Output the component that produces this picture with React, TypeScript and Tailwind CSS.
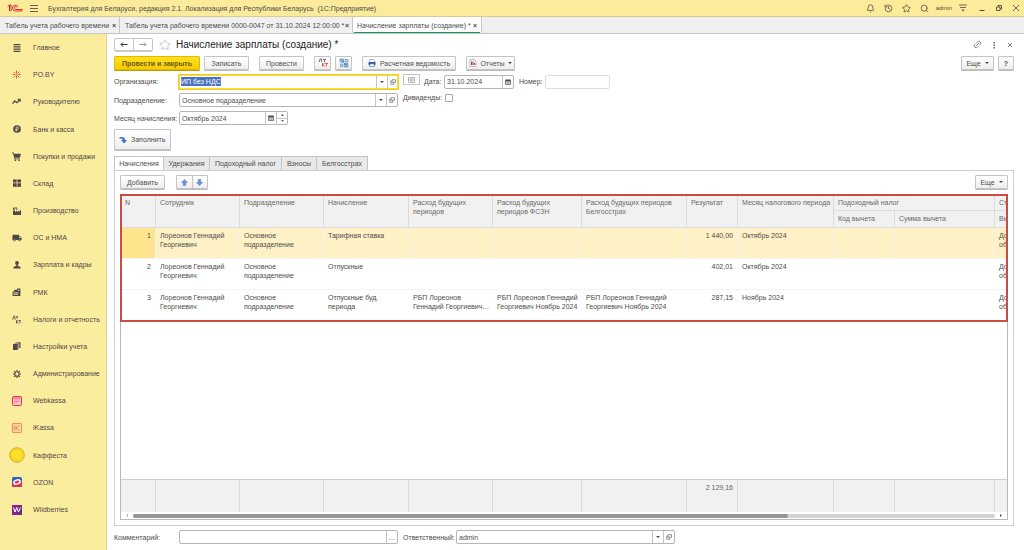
import { useEffect, useRef } from "react";
import type { ReactNode } from "react";
import { Bell, History, Link2, Search, Star } from "lucide-react";
import { MdLocalShipping } from "react-icons/md";

const button =
  "flex h-[14px] shrink-0 items-center justify-center whitespace-nowrap rounded-[1px] border border-[#c4c4c4] bg-linear-to-b from-white to-[#eeeeee] text-[#505050] shadow-[0_1px_0_#bdbdbd]";

const field = "flex h-[14px] items-stretch rounded-[2px] border border-[#b5b5b5] bg-white";

/* ---------- icons ---------- */

const Logo = () => (
  <svg viewBox="0 0 32 16" className="h-2 w-4" fill="none" stroke="#dc2630" strokeWidth="2">
    <path d="M1 5.500 5 2v12M8 14V1.500L3.500 5" />
    <path d="M22 5.500A5.800 5.800 0 1 0 17 14h14" />
    <path d="M19.500 6.500A2.800 2.800 0 1 0 17 11h14" />
  </svg>
);

const OpenIcon = () => (
  <svg viewBox="0 0 12 12" className="size-[6px]" fill="none" stroke="#666" strokeWidth="1.400">
    <path d="M4 1.500h7v5H4zM4 4H1.500v6.500h6V7" />
  </svg>
);

const Caret = () => (
  <svg viewBox="0 0 8 4" className="h-[2px] w-1" fill="#4a4a4a">
    <path d="M0 0h8L4 4z" />
  </svg>
);

const CalendarIcon = () => (
  <svg viewBox="0 0 12 12" className="size-[6px]">
    <path d="M1 2h10v9H1z" fill="#ddd" stroke="#606060" strokeWidth="1.500" />
    <path d="M1 2h10v3H1zM3 0h1.500v2H3zM7.500 0H9v2H7.500z" fill="#505050" />
    <path d="M3 7h6M3 9h6" stroke="#888" />
  </svg>
);

const DtKt = () => (
  <svg viewBox="0 0 20 20" className="size-[10px]" fill="none" strokeWidth="1.700">
    <path d="M2 8V7h1l1-5h3v5h1v1M10 3h6M13 3v5" stroke="#505a68" />
    <path d="M9 10v7M13.500 10 9.500 13.500 14 17M14 11h6M17 11v6" stroke="#dd4b35" />
  </svg>
);

const StructureIcon = () => (
  <svg viewBox="0 0 20 20" className="size-[10px]">
    <path d="M2 2h7v6H2zM12 3h6v5h-6zM3 12h5v5H3zM11 11h7v7h-7z" fill="#cfe1f4" stroke="#4f86bf" strokeWidth="1.400" />
    <path d="m5 5 9 9M3.500 4h4M12.500 13h4M12.500 16h4" stroke="#29649f" strokeWidth="1.400" />
  </svg>
);

const PrinterIcon = () => (
  <svg viewBox="0 0 18 18" className="size-2">
    <path d="M4 1h8l3 3v5H4z" fill="#fff" stroke="#6581b4" strokeWidth="1.400" />
    <rect x="1" y="7" width="16" height="7" rx="2" fill="#365c9f" />
    <path d="M4 11h10v6H4z" fill="#fff" stroke="#365c9f" strokeWidth="1.400" />
  </svg>
);

const ReportIcon = () => (
  <svg viewBox="0 0 16 16" className="size-2">
    <path d="M2 1h9l3 3v11H2z" fill="#fff" stroke="#9a9a9a" strokeWidth="1.300" />
    <path d="M5 5v7" stroke="#4b5ea5" strokeWidth="2" />
    <path d="M8 5v7M11 8v4" stroke="#d33c3c" strokeWidth="2.400" />
  </svg>
);

const BlueArrow = ({ down = false }: { down?: boolean }) => (
  <svg viewBox="0 0 14 14" className={down ? "size-[7px] rotate-180" : "size-[7px]"}>
    <path d="M7 1 13 7H9.500v6h-5V7H1z" fill="#6c93dc" stroke="#4f78c4" />
  </svg>
);

const FillIcon = () => (
  <svg viewBox="0 0 16 16" className="size-2">
    <path d="M1 2h5q6 0 6 6h4l-5.500 7L4 8h3.500q0-3-3.500-3H1z" fill="#3f73bd" />
  </svg>
);

const Arrow = ({ className, left = false }: { className: string; left?: boolean }) => (
  <svg viewBox="0 0 16 10" className={className} fill="none" stroke="currentColor" strokeWidth="2">
    {left ? <path d="M15 5H2M6 1 2 5l4 4" /> : <path d="M1 5h13M10 1l4 4-4 4" />}
  </svg>
);

const Glyph = ({ children, className = "size-2" }: { children: ReactNode; className?: string }) => (
  <svg viewBox="0 0 16 16" className={className} fill="#50474a">
    {children}
  </svg>
);

/* ---------- sidebar ---------- */

const sections: { label: string; icon: ReactNode }[] = [
  { label: "Главное", icon: <Glyph><path d="M1 0h14v2H1zM1 3.500h14v2H1zM1 7h14v2H1zM1 10.500h14v2H1zM1 14h14v2H1z" /></Glyph> },
  {
    label: "PO.BY",
    icon: (
      <Glyph className="size-[9px]">
        <path d="M8 1v5M8 10v5M1 8h4M11 8h4M3 3l3 3M13 3l-3 3M3 13l3-3M13 13l-3-3" stroke="#e13b45" strokeWidth="1.600" />
        <path d="M6.500 6.500h3v3h-3z" fill="#ef7a62" />
      </Glyph>
    ),
  },
  {
    label: "Руководителю",
    icon: <Glyph className="size-[9px]"><path d="m1 12 4-5 4 3 5-6M10 4h4.500v4.500" fill="none" stroke="#50474a" strokeWidth="2.200" /></Glyph>,
  },
  {
    label: "Банк и касса",
    icon: (
      <Glyph>
        <circle cx="8" cy="8" r="7.700" />
        <path d="M6.500 13V4H9q2.500 0 2.500 2.300T9 8.600H4.500M4.500 10.700H9" fill="none" stroke="#fbed9e" strokeWidth="1.400" />
      </Glyph>
    ),
  },
  {
    label: "Покупки и продажи",
    icon: (
      <Glyph className="size-[9px]">
        <path d="M0 1h3l.7 2H16l-2 7H5.500l.4 1.500H14V13H4.500L2 2.500H0z" />
        <circle cx="6" cy="14.500" r="1.500" />
        <circle cx="12.500" cy="14.500" r="1.500" />
      </Glyph>
    ),
  },
  { label: "Склад", icon: <Glyph><path d="M0 1h7.300v6H0zM8.700 1H16v6H8.700zM0 8.500h7.300v5.500H0zM8.700 8.500H16v5.500H8.700zM0 14.500h16V16H0z" /></Glyph> },
  {
    label: "Производство",
    icon: <Glyph><path d="M0 16V7h4v3l4-3v3l4-3v3l4-5v11zM0 1h3v5H0zM4 1h4v2H4zM6 3.500h3v1.500H6z" /></Glyph>,
  },
  { label: "ОС и НМА", icon: <MdLocalShipping className="size-[10px] -scale-x-100 rotate-180 -scale-y-100" /> },
  { label: "Зарплата и кадры", icon: <Glyph><circle cx="8" cy="4" r="3.800" /><path d="M6.500 7h3v2.500L15 12v3H1v-3l5.500-2.500z" /></Glyph> },
  {
    label: "РМК",
    icon: (
      <Glyph className="size-[9px]">
        <path d="M1 6h3V3h5V1h6v13H1zM3 8v4h8V8zM10.500 3v2H13V3z" fillRule="evenodd" />
        <path d="M4.500 9h2v2h-2zM8 9h2v2H8z" />
      </Glyph>
    ),
  },
  {
    label: "Налоги и отчетность",
    icon: (
      <Glyph className="size-[9px]">
        <path d="M1 8V7h1l1-5h2v5h1v1M7 3h4M9 3v4M8 9v6M11.500 9 8.500 12l3 3M12 10h4M14 10v5" fill="none" stroke="#50474a" strokeWidth="1.400" />
      </Glyph>
    ),
  },
  { label: "Настройки учета", icon: <Glyph><path d="M0 4h9.500v12H0zM3 2h8.500v12h-1V3H3zM5.500 0H15v12h-2.500V1h-7z" /></Glyph> },
  {
    label: "Администрирование",
    icon: (
      <Glyph>
        <circle cx="8" cy="8" r="4.500" fill="none" stroke="#50474a" strokeWidth="2.400" />
        <path d="M8 0v3M8 13v3M0 8h3M13 8h3M2.300 2.300l2 2M11.700 11.700l2 2M13.700 2.300l-2 2M4.300 11.700l-2 2" stroke="#50474a" strokeWidth="2.200" />
      </Glyph>
    ),
  },
  {
    label: "Webkassa",
    icon: (
      <svg viewBox="0 0 20 20" className="size-[10px]">
        <rect x="1" y="1" width="18" height="18" rx="2" fill="#f9d1c9" stroke="#e3304c" strokeWidth="2" />
        <path d="M2 4h16" stroke="#e3304c" strokeWidth="1.600" />
        <path d="M5 8h2M9 8h2M13 8h2M5 11h2M9 11h2M13 11h2M5 14h2M9 14h2" stroke="#e3304c" strokeWidth="1.600" />
      </svg>
    ),
  },
  {
    label: "iKassa",
    icon: (
      <svg viewBox="0 0 20 20" className="size-[10px]" fill="none" stroke="#e8714b" strokeWidth="1.500">
        <rect x="1" y="1" width="18" height="18" rx="1" fill="#fbdc9a" />
        <path d="M4.500 5v10M8 5v10M15 5l-6 5 6 5" />
      </svg>
    ),
  },
  {
    label: "Каффеста",
    icon: (
      <svg viewBox="0 0 32 32" className="size-4">
        <circle cx="16" cy="16" r="14.500" fill="#fbe02a" stroke="#d8a31f" strokeWidth="2" />
        <circle cx="16" cy="16" r="10.500" fill="none" stroke="#e5bc22" strokeWidth="1.500" strokeDasharray="2 2" />
      </svg>
    ),
  },
  {
    label: "OZON",
    icon: (
      <svg viewBox="0 0 20 20" className="size-[10px]">
        <rect width="20" height="20" rx="3" fill="#2f63c8" />
        <path d="M0 14 20 9v8q0 3-3 3H3q-3 0-3-3z" fill="#e5304f" />
        <ellipse cx="10" cy="10" rx="6.500" ry="4" fill="#e5304f" stroke="#fff" strokeWidth="3" transform="rotate(-18 10 10)" />
      </svg>
    ),
  },
  {
    label: "Wildberries",
    icon: (
      <svg viewBox="0 0 20 20" className="size-[10px]">
        <rect width="20" height="20" rx="1" fill="#8a2391" />
        <path d="M16 0h4v20h-8z" fill="#593a78" />
        <path d="m3 5 3 9 3.500-9L13 14l4-9" fill="none" stroke="#fff" strokeWidth="2" />
      </svg>
    ),
  },
];

/* ---------- table data ---------- */

const columns = (
  <colgroup>
    <col className="w-[35px]" />
    <col className="w-[84px]" />
    <col className="w-[84px]" />
    <col className="w-[85px]" />
    <col className="w-[84px]" />
    <col className="w-[89px]" />
    <col className="w-[105px]" />
    <col className="w-[51px]" />
    <col className="w-[96px]" />
    <col className="w-[61px]" />
    <col className="w-[100px]" />
    <col />
  </colgroup>
);

const rows = [
  ["1", "Лореонов Геннадий Георгиевич", "Основное подразделение", "Тарифная ставка", "", "", "", "1 440,00", "Октябрь 2024"],
  ["2", "Лореонов Геннадий Георгиевич", "Основное подразделение", "Отпускные", "", "", "", "402,01", "Октябрь 2024"],
  [
    "3",
    "Лореонов Геннадий Георгиевич",
    "Основное подразделение",
    "Отпускные буд. периода",
    "РБП Лореонов Геннадий Георгиевич…",
    "РБП Лореонов Геннадий Георгиевич Ноябрь 2024",
    "РБП Лореонов Геннадий Георгиевич Ноябрь 2024",
    "287,15",
    "Ноябрь 2024",
  ],
];

const tabs = [
  { label: "Начисления", width: "w-[50px]" },
  { label: "Удержания", width: "w-[46px]" },
  { label: "Подоходный налог", width: "w-[72px]" },
  { label: "Взносы", width: "w-[35px]" },
  { label: "Белгосстрах", width: "w-[51px]" },
];

/* ---------- pieces ---------- */

const IconButton = ({ label, children, className = "w-[11px]" }: { label: string; children: ReactNode; className?: string }) => (
  <button type="button" aria-label={label} className={`flex shrink-0 items-center justify-center border-l border-[#c4c4c4] ${className}`}>
    {children}
  </button>
);

const headCell = "border-r border-[#dcdcdc] px-1 pt-[3px] text-left align-top font-normal leading-[9px]";

export default function App() {
  const organization = useRef<HTMLInputElement>(null);

  useEffect(() => {
    organization.current?.focus();
    organization.current?.select();
  }, []);

  return (
    <div className="flex h-screen min-h-[550px] flex-col bg-white font-['Liberation_Sans',Arial,sans-serif] text-[7px] leading-[9px] text-[#4c4c4c]">
      <header className="flex h-[17px] shrink-0 items-center border-b border-[#d5cb93] bg-[#fbeb9b] pr-1 pl-[7px]">
        <Logo />
        <button aria-label="Меню" className="ml-[7px] flex w-2 flex-col gap-[2px]">
          <span className="h-px w-full bg-[#6b6448]" />
          <span className="h-px w-full bg-[#6b6448]" />
          <span className="h-px w-full bg-[#6b6448]" />
        </button>
        <h1 className="ml-[10px] whitespace-pre">
          {"Бухгалтерия для Беларуси, редакция 2.1. Локализация для Республики Беларусь  (1С:Предприятие)"}
        </h1>
        <div className="ml-auto flex items-center gap-[9px] text-[#4f4a38]">
          <button aria-label="Уведомления"><Bell className="size-[9px]" /></button>
          <button aria-label="История"><History className="size-[9px]" /></button>
          <button aria-label="Избранное"><Star className="size-[9px]" /></button>
          <button aria-label="Поиск"><Search className="size-[9px]" /></button>
          <span className="-mx-[2px] text-[6px]">admin</span>
          <button aria-label="Настройки">
            <svg viewBox="0 0 16 16" className="size-2" fill="none" stroke="currentColor" strokeWidth="1.600">
              <path d="M0 2h16M2 7h12" />
              <path d="M5 11h6l-3 4z" fill="currentColor" stroke="none" />
            </svg>
          </button>
          <button aria-label="Свернуть" className="ml-[2px]">
            <svg viewBox="0 0 16 16" className="size-2" stroke="currentColor" strokeWidth="2"><path d="M3 13h10" /></svg>
          </button>
          <button aria-label="Восстановить">
            <svg viewBox="0 0 16 16" className="size-2" fill="none" stroke="currentColor" strokeWidth="1.800">
              <path d="M3 6h7v7H3zM6 6V3h7v7h-3" />
            </svg>
          </button>
          <button aria-label="Закрыть">
            <svg viewBox="0 0 16 16" className="size-2" stroke="currentColor" strokeWidth="1.600"><path d="m2 2 12 12M14 2 2 14" /></svg>
          </button>
        </div>
      </header>

      <nav className="flex h-[17px] shrink-0 items-stretch border-b border-[#c6c6c6] bg-[#f0f0f0]" aria-label="Открытые окна">
        <div className="flex w-[120px] items-center justify-between border-r border-[#c6c6c6] pr-[3px] pl-[5px] whitespace-nowrap">
          <a href="#timesheet">Табель учета рабочего времени</a>
          <button aria-label="Закрыть вкладку" className="font-bold">×</button>
        </div>
        <div className="flex w-[233px] items-center justify-between border-r border-[#c6c6c6] pr-[3px] pl-[5px] whitespace-nowrap">
          <a href="#timesheet-47">Табель учета рабочего времени 0000-0047 от 31.10.2024 12:00:00 *</a>
          <button aria-label="Закрыть вкладку" className="font-bold">×</button>
        </div>
        <div className="flex w-[129px] items-stretch border-r border-[#c6c6c6] bg-white px-px whitespace-nowrap">
          <div className="flex flex-1 items-center justify-between px-[3px] pt-px shadow-[inset_0_-1px_0_#149a5b]">
            <a href="#payroll">Начисление зарплаты (создание) *</a>
            <button aria-label="Закрыть вкладку" className="font-bold">×</button>
          </div>
        </div>
      </nav>

      <div className="flex min-h-0 flex-1">
        <aside className="flex w-[107px] shrink-0 flex-col border-r border-[#e6d588] bg-[#fbed9e] pb-[27px] text-[#50474a]">
          {sections.map((s) => (
            <a key={s.label} href="#section" className="flex flex-1 items-center whitespace-nowrap">
              <span className="flex w-[33px] shrink-0 justify-center">{s.icon}</span>
              {s.label}
            </a>
          ))}
        </aside>

        <main className="flex min-w-0 flex-1 flex-col pt-1 pr-[10px] pb-[6px] pl-[7px]">
          <div className="flex h-[13px] shrink-0 items-center">
            <div className="flex h-[13px] w-[39px] items-stretch rounded-[2px] border border-[#c4c4c4] shadow-[0_1px_0_#d0d0d0]">
              <button aria-label="Назад" className="flex flex-1 items-center justify-center border-r border-[#c4c4c4]"><Arrow left className="h-[5px] w-2 text-[#333]" /></button>
              <button aria-label="Вперед" className="flex flex-1 items-center justify-center"><Arrow className="h-[5px] w-2 text-[#999]" /></button>
            </div>
            <button aria-label="В избранное" className="ml-[6px]"><Star className="size-3 text-[#b5b5b5]" strokeWidth={1.5} /></button>
            <h2 className="ml-[5px] text-[10px] leading-3 text-[#222222]">Начисление зарплаты (создание) *</h2>
            <div className="ml-auto flex items-center gap-2 text-[#666]">
              <button aria-label="Ссылка"><Link2 className="size-[9px] -rotate-45" /></button>
              <button aria-label="Еще действия">
                <svg viewBox="0 0 16 16" className="size-2" fill="currentColor"><path d="M7 2h3v3H7zM7 7h3v3H7zM7 12h3v3H7z" /></svg>
              </button>
              <button aria-label="Закрыть">
                <svg viewBox="0 0 16 16" className="size-2" stroke="currentColor" strokeWidth="1.600"><path d="m4 4 8 8M12 4l-8 8" /></svg>
              </button>
            </div>
          </div>

          <div className="mt-[5px] flex shrink-0 items-center">
            <button className="flex h-[14px] w-[86px] items-center justify-center rounded-[1px] border border-[#e0ba00] bg-linear-to-b from-[#ffdf1d] to-[#f8cd00] font-bold text-[#6b5a1c] shadow-[0_1px_0_#b99a10]">
              Провести и закрыть
            </button>
            <button className={`${button} ml-1 w-[45px]`}>Записать</button>
            <button className={`${button} ml-[10px] w-[45px]`}>Провести</button>
            <button aria-label="Дт/Кт" className={`${button} ml-[10px] w-[17px]`}><DtKt /></button>
            <button aria-label="Структура" className={`${button} ml-1 w-[17px]`}><StructureIcon /></button>
            <button className={`${button} ml-[10px] w-[94px] gap-1`}><PrinterIcon />Расчетная ведомость</button>
            <button className={`${button} ml-[10px] w-[49px] gap-[3px]`}><ReportIcon />Отчеты<Caret /></button>
            <button className={`${button} ml-auto w-[33px] gap-1`}>Еще<Caret /></button>
            <button aria-label="Справка" className={`${button} ml-1 w-4 font-bold`}>?</button>
          </div>

          <form className="mt-1 flex shrink-0 items-start" onSubmit={(e) => e.preventDefault()}>
            <div className="flex flex-col gap-1">
              <div className="flex h-[15px] items-center">
                <label htmlFor="org" className="w-[64px]">Организация:</label>
                <div className="-my-px flex h-4 w-[221px] items-stretch border border-[#f0cf1e] bg-white ring-1 ring-[#f8dc3c] ring-inset">
                  <input id="org" ref={organization} defaultValue="ИП без НДС" className="min-w-0 flex-1 pl-[2px] outline-none selection:bg-[#4a72bd] selection:text-white" />
                  <IconButton label="Выбрать"><Caret /></IconButton>
                  <IconButton label="Открыть"><OpenIcon /></IconButton>
                </div>
              </div>
              <div className="flex h-[14px] items-center">
                <label htmlFor="dep" className="w-[65px]">Подразделение:</label>
                <div className={`${field} w-[219px]`}>
                  <input id="dep" defaultValue="Основное подразделение" className="min-w-0 flex-1 pl-[2px] outline-none" />
                  <IconButton label="Выбрать"><Caret /></IconButton>
                  <IconButton label="Открыть"><OpenIcon /></IconButton>
                </div>
              </div>
              <div className="flex h-[14px] items-center">
                <label htmlFor="month" className="w-[65px] whitespace-nowrap">Месяц начисления:</label>
                <div className={`${field} w-[109px]`}>
                  <input id="month" defaultValue="Октябрь 2024" className="min-w-0 flex-1 pl-[2px] outline-none" />
                  <IconButton label="Календарь"><CalendarIcon /></IconButton>
                  <div className="flex w-[11px] flex-col border-l border-[#c4c4c4]">
                    <button type="button" aria-label="Больше" className="flex flex-1 items-center justify-center border-b border-[#c4c4c4]">
                      <svg viewBox="0 0 6 4" className="h-[2px] w-[3px]" fill="#666"><path d="M0 4h6L3 0z" /></svg>
                    </button>
                    <button type="button" aria-label="Меньше" className="flex flex-1 items-center justify-center">
                      <svg viewBox="0 0 6 4" className="h-[2px] w-[3px]" fill="#666"><path d="M0 0h6L3 4z" /></svg>
                    </button>
                  </div>
                </div>
              </div>
            </div>

            <div className="ml-1 flex flex-col gap-1">
              <div className="flex h-[15px] items-center">
                <button type="button" aria-label="Список" className="flex h-[11px] w-[17px] items-center justify-center self-start border border-[#c4c4c4]">
                  <svg viewBox="0 0 14 12" className="h-[6px] w-[7px]" fill="none" stroke="#999" strokeWidth="1.400">
                    <path d="M1 1h12v10H1zM3 4h8M3 6h8M3 8h8" />
                  </svg>
                </button>
                <label htmlFor="date" className="ml-1 w-5">Дата:</label>
                <div className={`${field} w-[70px]`}>
                  <input id="date" defaultValue="31.10.2024" className="min-w-0 flex-1 pl-[2px] outline-none" />
                  <IconButton label="Календарь"><CalendarIcon /></IconButton>
                </div>
                <label htmlFor="number" className="ml-[5px] w-[26px]">Номер:</label>
                <input id="number" className="h-[14px] w-[65px] rounded-[2px] border border-[#dedede] px-[2px] outline-none" />
              </div>
              <div className="flex h-[9px] items-center gap-[3px]">
                <label htmlFor="dividends">Дивиденды:</label>
                <input id="dividends" type="checkbox" className="size-2 appearance-none rounded-[1px] border border-[#a8a8a8] bg-white" />
              </div>
            </div>
          </form>

          <button className="mt-1 flex h-[21px] w-[57px] shrink-0 items-center gap-1 rounded-[1px] border border-[#c4c4c4] bg-linear-to-b from-white to-[#eeeeee] pl-1 shadow-[0_1px_0_#bdbdbd]">
            <FillIcon />
            Заполнить
          </button>

          <div role="tablist" className="mt-[6px] flex h-[14px] shrink-0 items-stretch">
            {tabs.map((t, i) => (
              <button
                key={t.label}
                role="tab"
                aria-selected={i === 0}
                className={`${t.width} flex items-center justify-center border border-b-0 border-[#c4c4c4] whitespace-nowrap ${
                  i === 0 ? "-mb-px bg-white pb-px" : "border-l-0 bg-[#e9e9e9]"
                }`}
              >
                {t.label}
              </button>
            ))}
          </div>

          <section className="flex min-h-0 flex-1 flex-col border border-[#cfcfcf] px-[5px] pt-1 pb-[5px]">
            <div className="flex shrink-0 items-center">
              <button className={`${button} w-[45px]`}>Добавить</button>
              <div className="ml-[11px] flex h-[14px] w-8 items-stretch rounded-[1px] border border-[#c4c4c4] bg-linear-to-b from-white to-[#eeeeee] shadow-[0_1px_0_#bdbdbd]">
                <button aria-label="Вверх" className="flex flex-1 items-center justify-center border-r border-[#c4c4c4]"><BlueArrow /></button>
                <button aria-label="Вниз" className="flex flex-1 items-center justify-center"><BlueArrow down /></button>
              </div>
              <button className={`${button} ml-auto w-[33px] gap-1`}>Еще<Caret /></button>
            </div>

            <div className="mt-[5px] flex min-h-0 flex-1 flex-col border border-[#b8b8b8]">
              <div className="relative">
                <table className="w-full table-fixed border-separate border-spacing-0 text-[#4c4c4c]">
                  {columns}
                  <thead className="bg-[#f1f1f1] text-[#6a6a6a]">
                    <tr className="h-4">
                      {["N", "Сотрудник", "Подразделение", "Начисление", "Расход будущих периодов", "Расход будущих периодов ФСЗН", "Расход будущих периодов Белгосстрах", "Результат", "Месяц налогового периода"].map((h) => (
                        <th key={h} rowSpan={2} className={`${headCell} border-b ${h.startsWith("Месяц") ? "whitespace-nowrap" : ""}`}>{h}</th>
                      ))}
                      <th colSpan={2} className={`${headCell} border-b`}>Подоходный налог</th>
                      <th className="overflow-hidden border-b border-[#dcdcdc] pt-[3px] pl-1 text-left align-top font-normal whitespace-nowrap">Ст</th>
                    </tr>
                    <tr className="h-[17px]">
                      <th className={`${headCell} border-b`}>Код вычета</th>
                      <th className={`${headCell} border-b`}>Сумма вычета</th>
                      <th className="overflow-hidden border-b border-[#dcdcdc] pt-[3px] pl-1 text-left align-top font-normal whitespace-nowrap">Вы</th>
                    </tr>
                  </thead>
                  <tbody>
                    {rows.map((r, i) => (
                      <tr key={r[0]} className={i === 0 ? "h-[31px] bg-[#fef1c6]" : "h-[31px]"}>
                        {r.map((c, j) => (
                          <td
                            key={j}
                            className={`border-b border-[#f3f3f3] px-1 pt-[3px] align-top ${i === 0 ? "border-r" : "pr-[5px]"} ${j === 0 || j === 7 ? "text-right" : ""} ${i === 0 && j === 0 ? "bg-[#fee48c]" : ""}`}
                          >
                            <div className={j >= 4 && j <= 6 ? "-mr-1" : ""}>{c}</div>
                          </td>
                        ))}
                        <td className={`border-b border-[#f3f3f3] ${i === 0 ? "border-r" : ""}`} />
                        <td className={`border-b border-[#f3f3f3] ${i === 0 ? "border-r" : ""}`} />
                        <td className="overflow-hidden border-b border-[#f3f3f3] pt-[3px] pl-1 align-top whitespace-nowrap">
                          До
                          <br />
                          об
                        </td>
                      </tr>
                    ))}
                  </tbody>
                </table>
                <div className="pointer-events-none absolute -inset-px border-2 border-[#cc4b42]" />
              </div>

              <div className="flex-1" />

              <table className="w-full shrink-0 table-fixed border-separate border-spacing-0 border-t border-[#cfcfcf] bg-[#f1f1f1] text-[#666666]">
                {columns}
                <tbody>
                  <tr className="h-8">
                    {Array.from({ length: 12 }, (_, i) => (
                      <td key={i} className={i === 11 ? "" : "border-r border-[#dcdcdc] pt-[3px] pr-1 text-right align-top"}>
                        {i === 7 ? "2 129,16" : ""}
                      </td>
                    ))}
                  </tr>
                </tbody>
              </table>
              <div className="flex h-[7px] shrink-0 items-center gap-1 px-1">
                <svg viewBox="0 0 4 6" className="h-[3px] w-[4px]" fill="#aaa"><path d="M4 0v6L0 3z" /></svg>
                <div className="h-1 flex-1 rounded-full bg-[#d4d4d4]">
                  <div className="h-1 w-[76%] rounded-full bg-[#979797]" />
                </div>
                <svg viewBox="0 0 4 6" className="h-[3px] w-[4px]" fill="#555"><path d="M0 0v6l4-3z" /></svg>
              </div>
            </div>
          </section>

          <footer className="mt-1 flex shrink-0 items-center">
            <label htmlFor="comment" className="w-[65px]">Комментарий:</label>
            <div className={`${field} w-[219px]`}>
              <input id="comment" className="min-w-0 flex-1 pl-[2px] outline-none" />
              <IconButton label="Выбрать">...</IconButton>
            </div>
            <label htmlFor="owner" className="ml-[5px] w-[53px]">Ответственный:</label>
            <div className={`${field} w-[219px]`}>
              <input id="owner" defaultValue="admin" className="min-w-0 flex-1 pl-[2px] outline-none" />
              <IconButton label="Выбрать"><Caret /></IconButton>
              <IconButton label="Открыть"><OpenIcon /></IconButton>
            </div>
          </footer>
        </main>
      </div>
    </div>
  );
}
